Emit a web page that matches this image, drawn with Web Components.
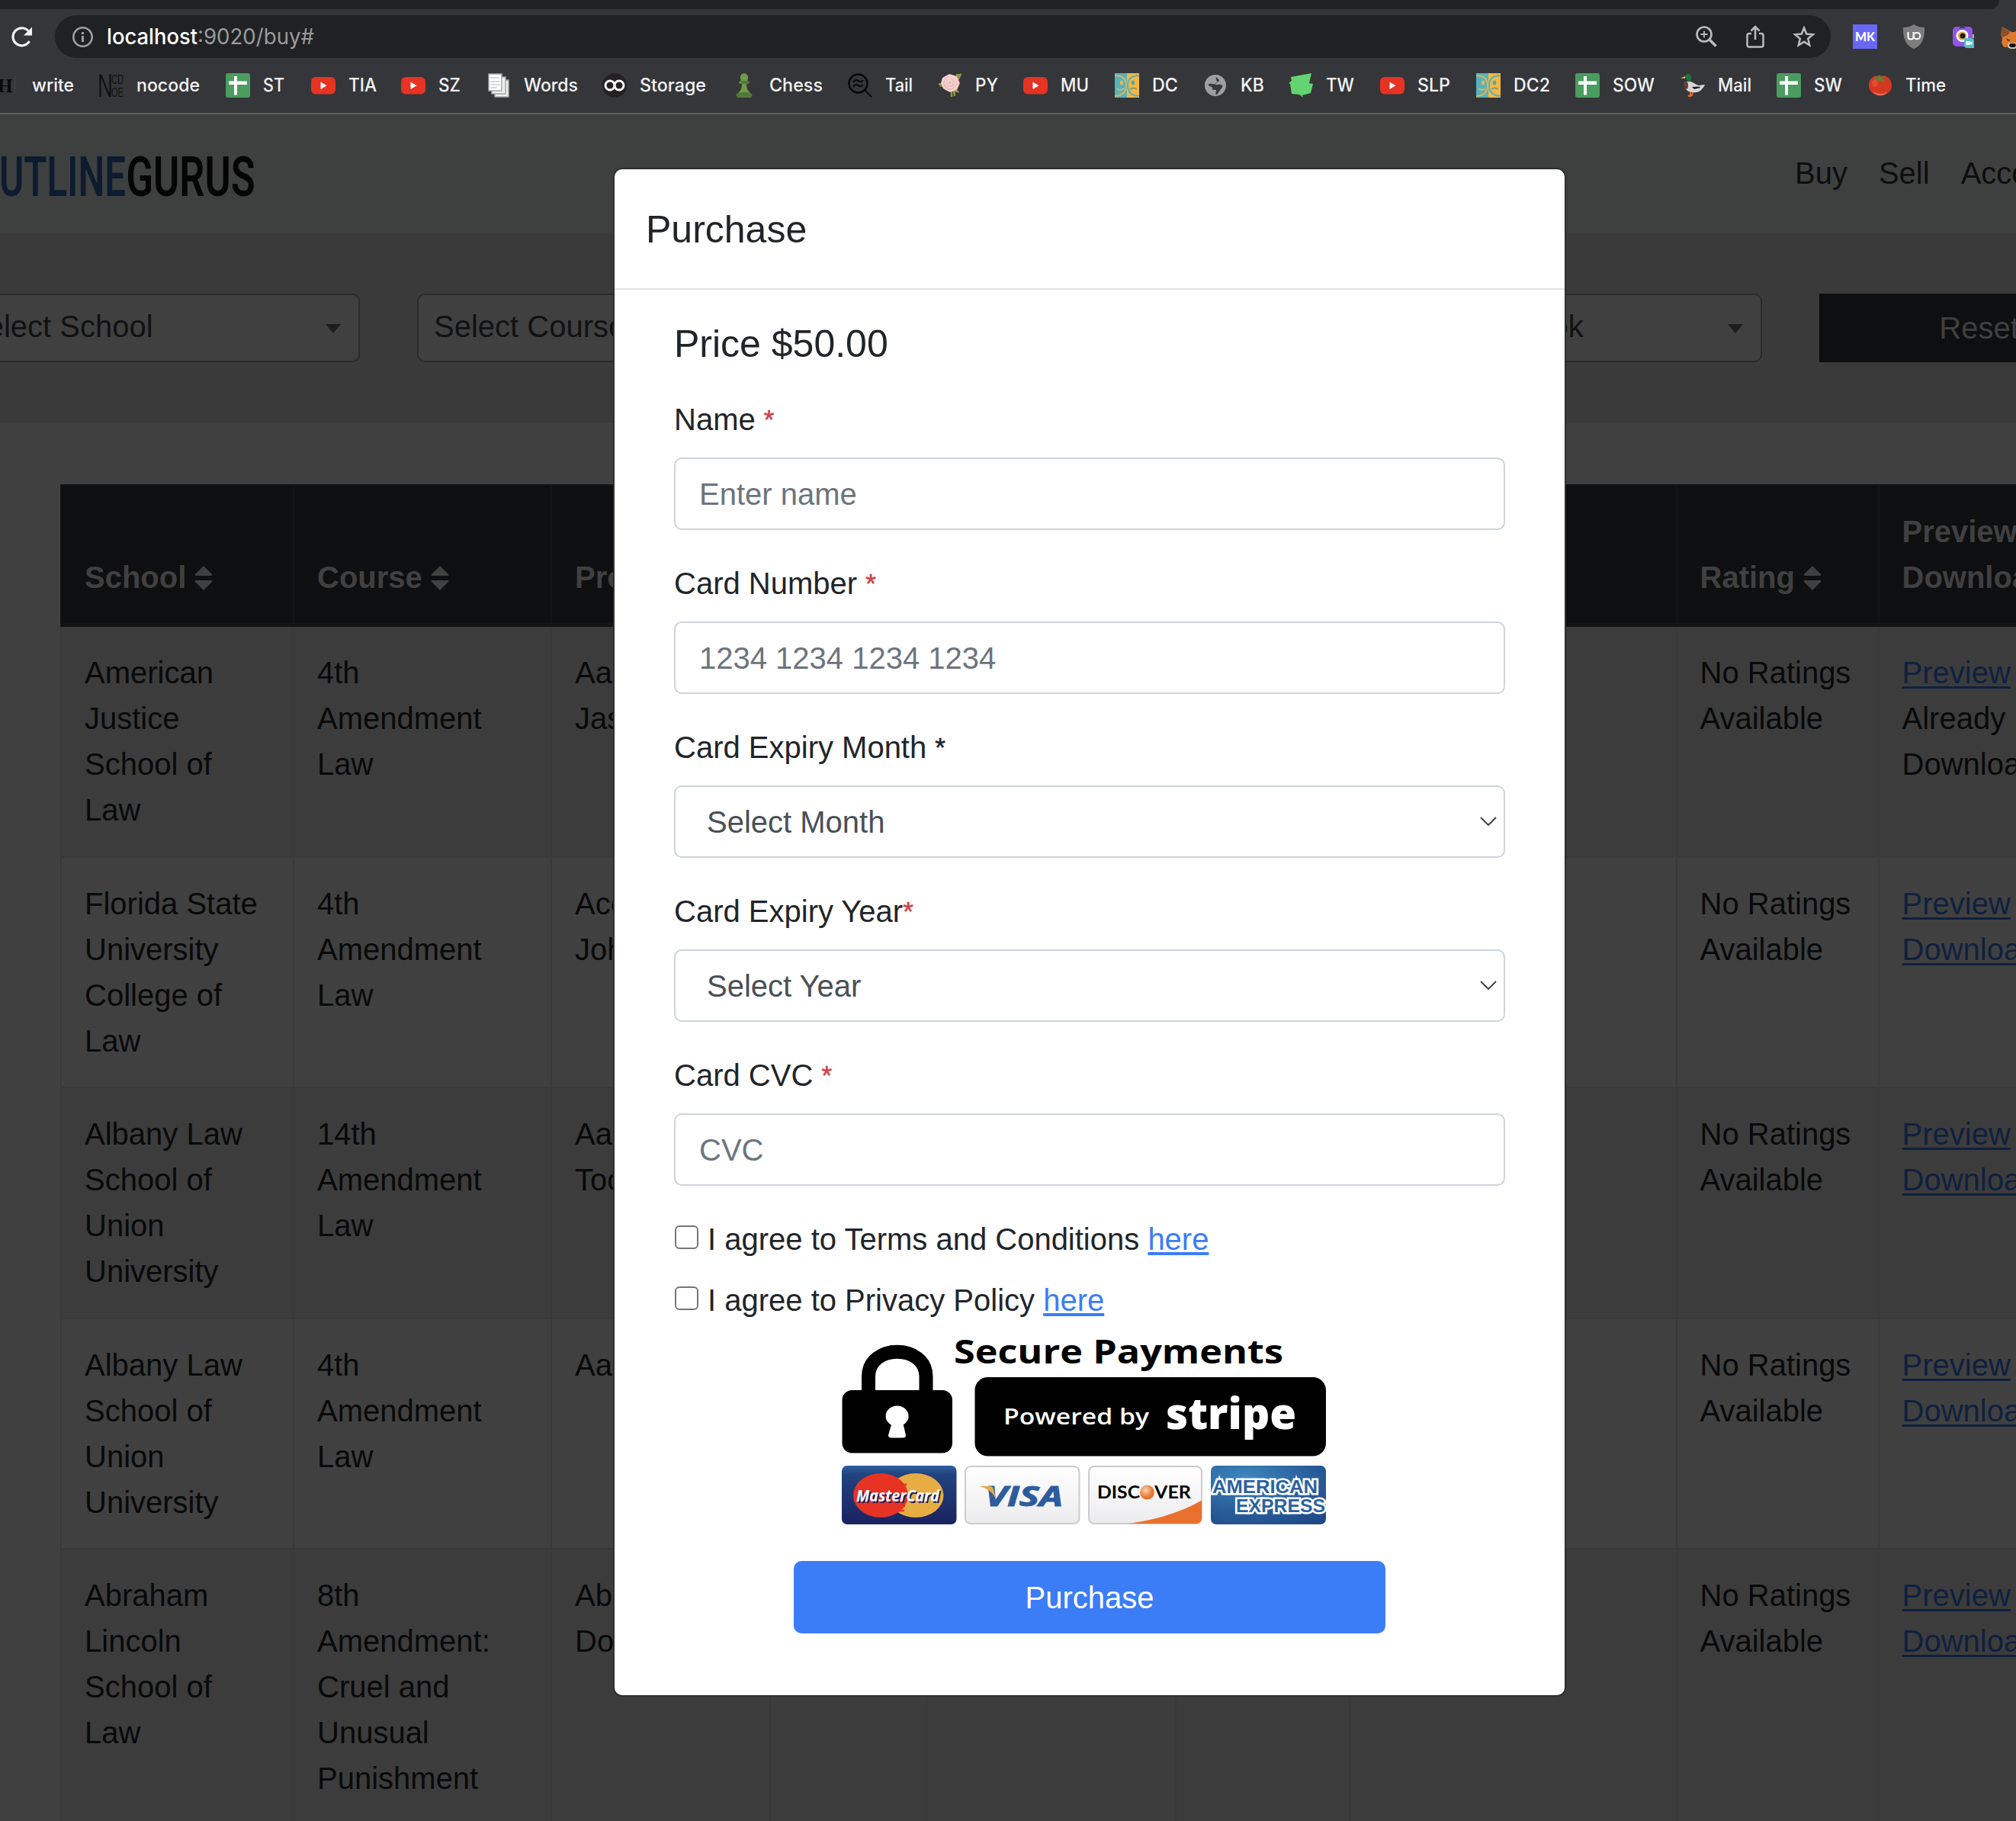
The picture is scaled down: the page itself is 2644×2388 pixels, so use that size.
<!DOCTYPE html>
<html lang="en"><head><meta charset="utf-8"><title>Buy</title>
<style>html,body{margin:0;height:2388px;width:2644px;overflow:hidden;background:#404040;font-family:"Liberation Sans",Arial,sans-serif;font-size:40px;line-height:60px}</style></head>
<body><buy-screen></buy-screen>
<script>
const svg=(vb,w,h,body)=>`<svg viewBox="${vb}" width="${w}" height="${h}" style="display:block;flex:none">${body}</svg>`;
const sheet=`<rect width="32" height="32" rx="3" fill="#4a9c5f"/><path d="M11 4h4v6.500h13v4.500h-13v13.500h-4v-13.500h-7v-4.500h7z" fill="#fff"/>`;
const tube=`<rect y="5" width="32" height="22.500" rx="6" fill="#e63323"/><path d="M12.500 11.500v9.500l8-4.750z" fill="#fff"/>`;
const face=`<path d="M0 0h16v32H0z" fill="#56b2bd"/><path d="M16 0h16v32H16z" fill="#f3b744"/><g fill="none" stroke-width="2"><path d="M0 3Q15 3 15 16T0 30" stroke="#d9b65c"/><path d="M32 3Q17 3 17 16T32 30" stroke="#56b2bd"/><path d="M3 20Q7 24 12 20" stroke="#d9b65c"/><path d="M20 21Q24 18 29 21" stroke="#899c68"/></g><ellipse cx="9" cy="12.500" rx="2.200" ry="3" fill="#e8b952"/><ellipse cx="24" cy="12.500" rx="2.200" ry="3" fill="#4fa6ad"/>`;
const ICONS={
h:`<text x="9" y="25" font-family="Liberation Serif" font-weight="700" font-size="25" fill="#080808">H</text><path d="M32 3v24" stroke="#55565a"/>`,
n:`<path d="M1.500 31V2.500h1L13.500 30h1V1.500" fill="none" stroke="#101012" stroke-width="2.200"/><g fill="#101012" font-family="Liberation Sans"><text x="16" y="14" font-size="17" textLength="16" lengthAdjust="spacingAndGlyphs">CD</text><text x="16" y="31" font-size="17" textLength="16" lengthAdjust="spacingAndGlyphs">OE</text></g>`,
s:sheet,y:tube,d:face,
w:`<g stroke="#a5a6a8" fill="#efefef" stroke-width="1.500"><path d="M11 9h18v22H11z"/><path d="M7 5h18v22H7z"/><path d="M3 1h17v22H3z" fill="#fff"/></g><path d="M5.500 6h11M5.500 11h12M5.500 15h12M5.500 19h8" stroke="#c8c8ca" stroke-width="1.500"/>`,
o:`<circle cx="16" cy="16" r="16" fill="#232122"/><g fill="none" stroke="#fff" stroke-width="3"><circle cx="10" cy="16" r="6"/><circle cx="22" cy="16" r="6"/></g>`,
c:`<path d="M9 12c0-1 3-2 3-3a5.300 5.300 0 1 1 8 0c0 1 3 2 3 3s-2 2-4 2c0 5 1 8 4 11s4 7-1 7H10c-5 0-4-4-1-7s4-6 4-11c-2 0-4-1-4-2z" fill="#719c44"/><path d="M6 27q10-5 20 0c1 3 0 5-4 5H10c-4 0-5-2-4-5z" fill="#527839"/><path d="M11 10h10l2 3-4 1h-6z" fill="#527839"/>`,
t:`<circle cx="13.500" cy="13.500" r="12" fill="none" stroke="#070708" stroke-width="2.500"/><path d="M22 22l9 9M7 12q3-5 6.500-2t6.500-1M7 18q3-5 6.500-2t6.500-1" fill="none" stroke="#070708" stroke-width="2"/>`,
p:`<path d="M24 2l7-1-4 8zM1 14l6-1-3 5zM23 20l5 5-6-1z" fill="#8d9941" stroke="#8d9941"/><path d="M18 24v7M21 23l1 7M24 3l6-1" stroke="#8d9941" stroke-width="2.500"/><path d="M6 6L15 1l10 3 4 9-4 9-9 3-9-5-3-7z" fill="#edbcbc"/><g fill="none" stroke="#f8dedd" stroke-width="1.300"><circle cx="16" cy="13" r="10"/><circle cx="16.500" cy="12.500" r="6.500"/><circle cx="16" cy="12" r="3"/></g>`,
g:`<circle cx="16" cy="16" r="14" fill="#9b9fa4"/><path d="M17 5c-2 3 4 6-1 9-3 1-8-2-9 1s5 1 5 5 5 0 5 3-2 4 0 5 4-5 6-7 4-5 0-6-7 2-7-1 5-2 5-5z" fill="#38393d"/>`,
k:`<path d="M3 5l27-5-3 13 5 1-3 12-11 3 1 3-5-4-10-1-2-13-2-1 4-3z" fill="#63d471"/>`,
m:`<path d="M6 4c1-4 8-4 8 1 0 3-1 4-1 6l-5-1c1-2 0-3-2-4z" fill="#197542"/><path d="M6 4L0 6.500l6 .500z" fill="#e2b746"/><path d="M7 11h6c4 1 7 4 11 5l8-1c-1 3-3 4-4 6-3 5-15 6-20 1-3-3-3-8-1-11z" fill="#d9d4d6"/><path d="M5 11c3-1 5 1 5 4s0 5-2 6c-3-2-5-6-3-10z" fill="#684038"/><path d="M15 18l10-.5 1 1.500-8 2z" fill="#16213f"/><path d="M13 25v4l-3 1M16 25l-1 4-2 1" fill="none" stroke="#dd6b34" stroke-width="2"/>`,
a:`<path d="M16 3.500C5 2 1 9 1 16.500c0 16.500 30 16.500 30 0C31 8 26 2 16 3.500z" fill="#d53720"/><ellipse cx="9" cy="13" rx="4" ry="5" fill="#f05a3e" opacity=".6"/><path d="M6 24q10 6 20 0-4 5.500-10 5.500T6 24z" fill="#f08f7d" opacity=".6"/><path d="M15 2l2 3 6-1-4 3 4 6-6-4-5 4 1-5-6-1 6-2z" fill="#4f8a34"/>`
};
const def=(n,css,html)=>customElements.define(n,class extends HTMLElement{connectedCallback(){if(this.shadowRoot)return;const r=this.attachShadow({mode:'open'});r.innerHTML=`<style>*{box-sizing:border-box}${css}</style>`+(typeof html==='function'?html(this):html);}});

/* Inline label stretched to a fixed advance so that neighbours stay aligned. */
def('fit-label',`:host{display:block;flex:none}svg{display:block;overflow:visible}`,e=>{
 const a=n=>e.getAttribute(n);
 return `<svg width="${a('w')}" height="32"><text x="0" y="${a('base')||24}" font-family="Inter" font-weight="${a('weight')||500}" font-size="${a('size')||24}" fill="${a('ink')||'#f3f4f5'}" textLength="${a('w')}" lengthAdjust="spacingAndGlyphs">${a('text')}</text></svg>`});

def('book-mark',`:host{display:flex;flex:none;gap:17px;align-items:center;height:32px}`,e=>{
 return svg('0 0 32 32',32,32,ICONS[e.getAttribute('icon')])+`<fit-label w="${e.getAttribute('w')}" text="${e.getAttribute('text')}"></fit-label>`});

const MARKS=[['h','write',-12,55],['n','nocode',130,83],['s','ST',296,28],['y','TIA',408,37],['y','SZ',526,29],['w','Words',638,71],['o','Storage',790,87],['c','Chess',960,70],['t','Tail',1112,36],['p','PY',1230,30],['y','MU',1342,37],['d','DC',1462,34],['g','KB',1578,31],['k','TW',1690,37],['y','SLP',1810,43],['d','DC2',1936,48],['s','SOW',2066,55],['m','Mail',2204,44],['s','SW',2330,37],['a','Time',2450,53]];

def('browser-chrome',`:host{display:block;height:150px;background:#35363a;border-bottom:2px solid #5e5f62}
.tabs{height:12px;width:2622px;background:#202124;border-radius:0 0 14px 0}
.tools{display:flex;height:64px;padding:8px 0 0 14px;align-items:center}
.url{width:2329px;height:56px;border-radius:28px;background:#202124;margin-left:29px;padding:0 19px 0 22px;display:flex;align-items:center;flex:none}
.ext{display:flex;align-items:center;margin-left:29px;gap:34px}
.marks{display:flex;margin:20px 0 0 -12px;width:2656px}.marks book-mark:first-child{gap:22px}`,()=>`
<div class="tabs"></div><div class="tools">
${svg('0 0 29 29',29,29,'<path d="M24.500 20A11.500 11.500 0 1 1 23 6.500" fill="none" stroke="#f1f2f4" stroke-width="3.200"/><path d="M28 1.500v11H17z" fill="#f1f2f4"/>')}
<div class="url">${svg('0 0 29 29',29,29,'<circle cx="14.500" cy="14.500" r="12.200" fill="none" stroke="#9aa0a6" stroke-width="2.600"/><path d="M14.500 13v8M14.500 8v3" stroke="#9aa0a6" stroke-width="3"/>')}
<fit-label style="margin-left:17px" w="119" size="28" base="26" text="localhost" ink="#fff"></fit-label><fit-label w="153" size="28" base="26" weight="400" text=":9020/buy#" ink="#9a9b9e"></fit-label><span style="flex:1"></span>
${svg('1 0 30 30',30,30,'<g fill="none" stroke="#b9bbbe" stroke-width="2.600"><circle cx="12" cy="12" r="9.500"/><path d="M19 19l8.500 8.500" stroke-width="3.600"/><path d="M12 7.500v9M7.500 12h9" stroke-width="1.800"/></g>')}
<span style="width:35px"></span>${svg('0 0 26 32',26,32,'<path d="M8 12H5q-2.500 0-2.500 2.500V27q0 2.500 2.500 2.500h16q2.500 0 2.500-2.500V14.500Q23.500 12 21 12h-3M13 20V4M7.500 8.500L13 3l5.500 5.500" fill="none" stroke="#b9bbbe" stroke-width="2.500"/>')}
<span style="width:35px"></span>${svg('0 0 32 32',32,32,'<path d="M16 4.500l3.200 8 8.600.700-6.600 5.600 2 8.400-7.200-4.500-7.200 4.500 2-8.400-6.600-5.600 8.600-.700z" fill="none" stroke="#b9bbbe" stroke-width="2.500"/>')}
</div>
<div class="ext">${svg('0 0 32 32',32,32,'<path d="M0 0h32v32H0z" fill="#6868f4"/><text x="3" y="22.300" font-family="Lato" font-size="17.500" font-weight="900" fill="#fff" textLength="26" lengthAdjust="spacingAndGlyphs">MK</text>')}
${svg('2 0 28 32',28,32,'<path d="M16 0Q22 4 30 4q1 22-14 28Q1 26 2 4q8 0 14-4z" fill="#7d7d7e"/><path d="M8.500 10v6q0 3.500 3.500 3.500t3.500-3.500v-6" fill="none" stroke="#fff" stroke-width="2"/><circle cx="20" cy="15" r="4.300" fill="none" stroke="#fff" stroke-width="2"/>')}
${svg('0 0 32 32',32,32,'<rect x="3" y="3" width="26" height="26" rx="5" fill="#8f56e8"/><path d="M12 5q4-2 7 0" stroke="#3a2462" stroke-width="1.500" fill="none"/><path d="M29 13h2v5h-2z" fill="#e8a931"/><circle cx="15.500" cy="15" r="8" fill="#fff"/><circle cx="15.500" cy="15" r="5.500" fill="#e8a931"/><circle cx="16" cy="15" r="3.500" fill="#1d1c26"/><path d="M18 20q0-2 2-2h7q4 0 4 4v9H22q-4 0-4-4z" fill="#54bfd1"/><path d="M20.500 22h5v5h-5zM25.500 24l3-2v5l-3-2z" fill="#fff"/>')}
${svg('2 0 32 32',32,32,'<path d="M4 3l12 7h4l12-7 2 11-2 4 1 6-4 6-6-1-4 1-3 0-4-1-6 1-3-6 1-6-2-4z" fill="#dc7a2d"/><path d="M4 3l10 7-3 4-7 3-2-4z" fill="#8b4f29"/><path d="M9 18l6 3-4 1zM27 18l-6 3 4 1z" fill="#5b3721"/><path d="M12 24h11l1 6-4 2h-5l-4-2z" fill="#d3c2b2"/><path d="M14 25h7l1 3-2 2h-5l-2-2z" fill="#15100e"/>')}
</div></div>
<div class="marks">${MARKS.map((m,i)=>`<book-mark icon="${m[0]}" text="${m[1]}" w="${m[3]}" style="width:${(MARKS[i+1]?MARKS[i+1][2]:2644)-m[2]}px"></book-mark>`).join('')}</div>`);

def('site-header',`:host{display:flex;height:155px;background:#3e403f;color:#0c0e0f;align-items:flex-start}
nav{display:flex;gap:41px;margin:47px 0 0 2020px}nav span{white-space:nowrap}svg{display:block;overflow:visible;flex:none}`,
`<svg width="334" height="155"><g font-family="Roboto" font-weight="600" font-size="72"><text x="-1" y="107" fill="#0c1b2f" textLength="166" lengthAdjust="spacingAndGlyphs">UTLINE</text><text x="165.500" y="107" fill="#040404" textLength="169" lengthAdjust="spacingAndGlyphs">GURUS</text></g></svg>
<nav><span>Buy</span><span>Sell</span><span>Account</span></nav>`);

def('filter-select',`:host{display:flex;flex:none;width:538px;height:90px;border:2.500px solid #2a2b2c;border-radius:10px;background:#404040;color:#101112;padding:11px 23px 0 20px;justify-content:space-between;white-space:nowrap}i{border:10px solid transparent;border-top:12px solid #1d1d1d;border-bottom:0;margin-top:27px;height:0}`,`<slot></slot><i></i>`);
def('filter-bar',`:host{display:flex;height:250px;background:#3a3a3a;padding:80px 0 0;gap:75px;margin-left:-66px}
b{font-weight:400;background:#0d0f10;color:#3f4040;width:419px;height:90px;text-align:center;padding-top:15px;flex:none}`,
`<filter-select>Select School</filter-select><filter-select>Select Course</filter-select><filter-select></filter-select><filter-select>Select Textbook</filter-select><b>Reset</b>`);

const W=[305,338,286.500,205,327,228,429,265,320];
def('table-row',`:host{display:flex;flex:none;height:302.500px;background:var(--row,#404040);border-bottom:2px solid #38393a}
:host([head]){background:#0d0f10;color:#404040;font-weight:700;height:187px;border:2px solid #111315;border-left:0;border-bottom-width:5px;align-items:stretch}
div{flex:none;padding:30px 0 0 31px;border-left:2px solid #38393a;white-space:pre-line}
div:not(:first-child){padding-left:30px}
:host([head]) div{border-color:#121415;display:flex;align-items:flex-end;white-space:pre;padding-bottom:30px;padding-top:0}
u{color:#0f203f;text-decoration-thickness:3px;text-underline-offset:4px}svg{margin:0 0 13px 11px}`,e=>{
 const head=e.hasAttribute('head');
 return JSON.parse(e.getAttribute('cells')).map((t,i)=>`<div style="width:${W[i]}px">${head&&t&&i<8?t+svg('0 0 24 32',24,32,'<path d="M12 0l11 11q1 2-1 2H2q-2 0-1-2zM12 32l11-11q1-2-1-2H2q-2 0-1 2z" fill="#404040"/>'):t}</div>`).join('')});
const nr='No Ratings\nAvailable',pd='<u>Preview</u>\n<u>Download</u>';
const ROWS=[['American\nJustice\nSchool of\nLaw','4th\nAmendment\nLaw','Aar\nJas','<u>Preview</u>\nAlready\nDownloaded'],['Florida State\nUniversity\nCollege of\nLaw','4th\nAmendment\nLaw','Acc\nJoh',pd],['Albany Law\nSchool of\nUnion\nUniversity','14th\nAmendment\nLaw','Aac\nToo',pd],['Albany Law\nSchool of\nUnion\nUniversity','4th\nAmendment\nLaw','Aar',pd],['Abraham\nLincoln\nSchool of\nLaw','8th\nAmendment:\nCruel and\nUnusual\nPunishment','Abr\nDo',pd]];
def('outline-table',`:host{display:flex;flex-direction:column;margin:80px 0 0 79px;width:2704px;color:#08090a}`,()=>{
 const row=(c,x)=>`<table-row ${x} cells='${JSON.stringify(c)}'></table-row>`;
 return row(['School','Course','Pro','','','','','Rating','Preview/\nDownload'],'head')+ROWS.map((r,i)=>row([r[0],r[1],r[2],'','','','',nr,r[3]],`style="--row:${i%2?'#404040':'#3c3c3c'}${i===4?';height:362.500px':''}"`)).join('')});

def('form-field',`:host{display:block;height:215px}label{display:block;height:60px;margin-bottom:20px}em{font-style:normal;color:#cb444a}
em,s{text-decoration:none;font-size:35px;line-height:0;vertical-align:2px;-webkit-text-stroke:.6px currentColor}
.box{height:95px;border:2px solid #ced4da;border-radius:10px;color:#6c757d;padding:16px 8px 0 31px;display:flex;justify-content:space-between}
:host([menu]) .box{color:#495057;padding-left:41px}svg{margin-top:21px}`,e=>`<label>${e.getAttribute('label')}${e.hasAttribute('plain')?' <s>*</s>':(e.hasAttribute('tight')?'':' ')+'<em>*</em>'}</label><div class="box"><slot></slot>${e.hasAttribute('menu')?svg('0 0 24 16',24,16,'<path d="M2 3l10 10L22 3" fill="none" stroke="#343a40" stroke-width="1.800"/>'):''}</div>`);
def('agree-line',`:host{display:flex;height:60px;margin-bottom:20px}i{width:31px;height:31px;border:2px solid #767676;border-radius:6px;margin:12px 12px 0 1px}u{color:#3b7df7;text-decoration-thickness:4px;text-underline-offset:3px}p{margin:0}`,`<i></i><p><slot></slot> <u>here</u></p>`);

def('pay-badge',`:host{display:block;height:250px;margin-left:220px}svg{overflow:visible}`,svg('1104 1754 636 245',636,245,`
<defs><linearGradient id="mc" x2="0" y2="1"><stop stop-color="#2f5fa0"/><stop offset=".15" stop-color="#21437f"/><stop offset="1" stop-color="#1b2260"/></linearGradient>
<linearGradient id="wh" x2="0" y2="1"><stop stop-color="#fff"/><stop offset="1" stop-color="#ececee"/></linearGradient>
<radialGradient id="ax" cx=".3" cy=".2" r="1"><stop stop-color="#3d86bd"/><stop offset=".5" stop-color="#2b629f"/><stop offset="1" stop-color="#1f4785"/></radialGradient>
<radialGradient id="or" cx=".4" cy=".35"><stop stop-color="#fbd3b0"/><stop offset="1" stop-color="#e8752f"/></radialGradient><clipPath id="dc"><rect x="1428" y="1922" width="148" height="75" rx="7"/></clipPath></defs>
<rect x="1104.500" y="1822" width="144.500" height="82.500" rx="13"/><path d="M1139 1824v-20c0-43 75.500-43 75.500 0v20" fill="none" stroke="#000" stroke-width="18"/>
<ellipse cx="1176.600" cy="1856" rx="15" ry="13.500" fill="#fff"/><path d="M1170 1864h14l4 17q0 3.500-4 3.500h-15q-4 0-4-3.500z" fill="#fff"/>
<rect x="1278.500" y="1805" width="460.500" height="103.500" rx="17"/>
<g font-family="Open Sans" font-weight="700"><text x="1251" y="1787" font-size="43" textLength="432" lengthAdjust="spacingAndGlyphs">Secure Payments</text>
<text x="1316" y="1867" font-size="29" font-weight="600" fill="#fff" textLength="191" lengthAdjust="spacingAndGlyphs">Powered by</text>
<text x="1529" y="1873" font-size="57" font-weight="800" fill="#fff" textLength="171" lengthAdjust="spacingAndGlyphs">stripe</text></g>
<rect x="1104" y="1921" width="150.500" height="77" rx="7" fill="url(#mc)"/><ellipse cx="1201" cy="1960" rx="36.500" ry="29" fill="#e7ad42"/><ellipse cx="1155" cy="1960" rx="36" ry="29" fill="#e63323"/><path d="M1172 1946h17M1168 1952h20M1170 1974h17M1172 1980h14" stroke="#e63323" stroke-width="2.500"/>
<text x="1123" y="1968" font-family="Open Sans" font-weight="700" font-style="italic" font-size="22" fill="#fff" textLength="109" lengthAdjust="spacingAndGlyphs" style="text-shadow:2px 2px 0 #1b2260">MasterCard</text>
<rect x="1266" y="1922" width="149.500" height="75" rx="7" fill="url(#wh)" stroke="#cbcccd" stroke-width="2"/><text x="1292" y="1974" font-family="Open Sans" font-style="italic" font-weight="700" font-size="36" fill="#2d5c9e" stroke="#2d5c9e" textLength="102" lengthAdjust="spacingAndGlyphs">VISA</text><path d="M1284 1948h14q4 0 5 4l3 12q-7-13-22-16z" fill="#e7ad42"/>
<rect x="1428" y="1922" width="148" height="75" rx="7" fill="url(#wh)" stroke="#cbcccd" stroke-width="2"/><path clip-path="url(#dc)" d="M1472 1998q65-8 105-32v32z" fill="#ea702e"/>
<g font-family="Lato" font-weight="700" font-size="22"><text x="1439" y="1963.500" textLength="56" lengthAdjust="spacingAndGlyphs">DISC</text><text x="1514" y="1963.500" textLength="48" lengthAdjust="spacingAndGlyphs">VER</text></g><circle cx="1504.500" cy="1956" r="9.500" fill="url(#or)"/>
<rect x="1588" y="1921" width="151" height="77" rx="7" fill="url(#ax)"/><g font-family="Liberation Sans" font-weight="700" font-size="23" fill="#2b629f" stroke="#fff" stroke-width="5" paint-order="stroke"><text x="1590" y="1957" textLength="138" lengthAdjust="spacingAndGlyphs">AMERICAN</text><text x="1621" y="1982" textLength="117" lengthAdjust="spacingAndGlyphs">EXPRESS</text></g>`));

def('purchase-modal',`:host{position:absolute;left:804px;top:220px;width:1250px;height:2005px;border:2px solid #2f3031;border-radius:12px;background:#fff;color:#212529;display:block;overflow:hidden}
h5{margin:0;font-size:50px;font-weight:400}header{height:158px;border-bottom:2px solid #dee2e6;padding:49px 0 0 41px}
main{padding:41px 78px 0}main h5{margin-bottom:39px}button{display:block;width:776px;height:95px;margin:42px auto 0;border:0;border-radius:10px;background:#3b7df7;color:#fff;font:40px/60px "Liberation Sans",sans-serif}`,
`<header><h5>Purchase</h5></header><main><h5>Price $50.00</h5>
<form-field label="Name">Enter name</form-field><form-field label="Card Number">1234 1234 1234 1234</form-field><form-field label="Card Expiry Month" plain menu>Select Month</form-field><form-field label="Card Expiry Year" tight menu>Select Year</form-field><form-field label="Card CVC">CVC</form-field>
<agree-line>I agree to Terms and Conditions</agree-line><agree-line>I agree to Privacy Policy</agree-line><pay-badge></pay-badge><button>Purchase</button></main>`);
def('buy-screen',`:host{display:block;width:2644px;height:2388px;overflow:hidden;position:relative;background:#404040}`,`<browser-chrome></browser-chrome><site-header></site-header><filter-bar></filter-bar><outline-table></outline-table><purchase-modal></purchase-modal>`);
</script></body></html>
